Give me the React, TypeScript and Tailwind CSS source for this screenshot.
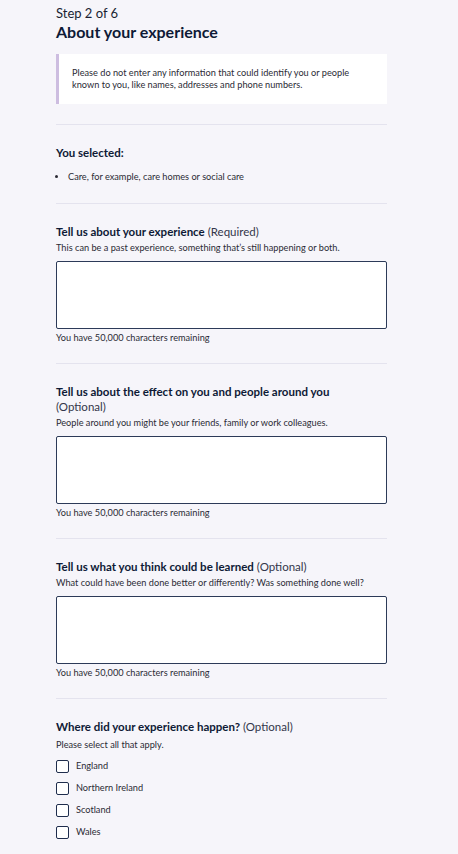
import React from "react";

const fields = [
  {
    title: "Tell us about your experience",
    tag: "(Required)",
    hint: "This can be a past experience, something that’s still happening or both.",
    wrap: false,
  },
  {
    title: "Tell us about the effect on you and people around you",
    tag: "(Optional)",
    hint: "People around you might be your friends, family or work colleagues.",
    wrap: true,
  },
  {
    title: "Tell us what you think could be learned",
    tag: "(Optional)",
    hint: "What could have been done better or differently? Was something done well?",
    wrap: false,
  },
];

const places = ["England", "Northern Ireland", "Scotland", "Wales"];

function Divider() {
  return <div className="h-px bg-[#e4e3ee]" />;
}

export default function App() {
  return (
    <div
      className="min-h-[854px] bg-[#f6f5fa] text-[#2b2b35]"
      style={{ fontFamily: "Lato, 'Liberation Sans', sans-serif" }}
    >
      <div className="ml-[56px] w-[331px] pt-[5px] pb-6">
        <p className="text-[13px] leading-[16px] text-[#1a1f33]">Step 2 of 6</p>
        <h1 className="text-[16px] leading-[22px] font-bold text-[#0e1a36]">
          About your experience
        </h1>

        {/* Warning callout */}
        <div className="mt-[11px] mb-5 bg-white border-l-[3px] border-[#cdbde0] pl-[13px] pr-4 py-[13px]">
          <p className="text-[9.2px] leading-[12px] text-[#2b2b35]">
            Please do not enter any information that could identify you or people
            known to you, like names, addresses and phone numbers.
          </p>
        </div>

        <Divider />

        <div className="pt-[21px] pb-5">
          <h2 className="text-[11.5px] leading-[14px] font-bold text-[#0e1a36]">
            You selected:
          </h2>
          <ul className="mt-[11px] list-disc pl-[12px] text-[9.2px] leading-[12px]">
            <li>Care, for example, care homes or social care</li>
          </ul>
        </div>

        {fields.map((f) => (
          <div key={f.title}>
            <Divider />
            <div className="pt-5 pb-[19px]">
              <h2 className="text-[11.5px] leading-[15px] text-[#0e1a36]">
                <span className="font-bold">{f.title}</span>
                {f.wrap ? <br /> : " "}
                <span className="text-[#33364a]">{f.tag}</span>
              </h2>
              <p className="mt-[3px] text-[9.2px] leading-[12px]">{f.hint}</p>
              <textarea className="mt-[7px] block w-full h-[68px] resize-none bg-white border-[1.5px] border-[#2c3a58] rounded-[2px]" />
              <p className="mt-[3px] text-[9.2px] leading-[12px]">
                You have 50,000 characters remaining
              </p>
            </div>
          </div>
        ))}

        <Divider />
        <div className="pt-5">
          <h2 className="text-[11.5px] leading-[15px] text-[#0e1a36]">
            <span className="font-bold">Where did your experience happen?</span>{" "}
            <span className="text-[#33364a]">(Optional)</span>
          </h2>
          <p className="mt-[5px] text-[9.2px] leading-[12px]">
            Please select all that apply.
          </p>
          <div className="mt-[4px] flex flex-col">
            {places.map((p) => (
              <label key={p} className="flex items-center gap-[7px] h-[22px]">
                <span className="w-[13px] h-[13px] bg-white border-[1.5px] border-[#1f2d4d] rounded-[2px]" />
                <span className="text-[9.2px] leading-[12px]">{p}</span>
              </label>
            ))}
          </div>
        </div>
      </div>
    </div>
  );
}
